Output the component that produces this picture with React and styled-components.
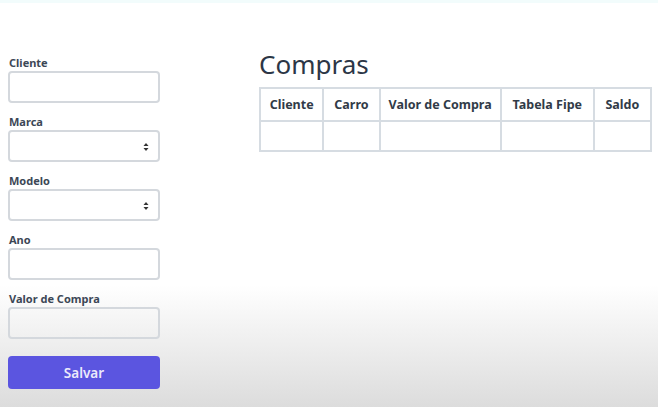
import React from 'react';
import styled, { createGlobalStyle } from 'styled-components';

const GlobalStyle = createGlobalStyle`
    html, body {
        margin: 0;
        padding: 0;
    }
    body {
        width: 658px;
        height: 407px;
        overflow: hidden;
        font-family: 'Noto Sans', 'DejaVu Sans', sans-serif;
        background: linear-gradient(to bottom, #ffffff 0, #ffffff 285px, #dcdcdc 407px);
        border-top: 3px solid #f2fcfc;
        box-sizing: border-box;
    }
`;

const Page = styled.div`
    display: flex;
    align-items: flex-start;
    padding: 53px 0 0 8px;
`;

const Form = styled.form`
    display: flex;
    flex-direction: column;
    width: 152px;
`;

const Field = styled.div`
    display: flex;
    flex-direction: column;
    margin-bottom: 12px;
`;

const Label = styled.label`
    font-size: 11px;
    font-weight: 700;
    line-height: 14px;
    margin-bottom: 1px;
    color: #3c4756;
    padding-left: 1px;
`;

const Input = styled.div`
    position: relative;
    height: 32px;
    box-sizing: border-box;
    border: 2px solid #d4d8dd;
    border-radius: 4px;
    background: transparent;
`;

const Arrows = styled.svg`
    position: absolute;
    right: 9px;
    top: 10px;
`;

const Button = styled.button`
    margin-top: 5px;
    height: 33px;
    border: none;
    border-radius: 4px;
    background: #5b55e0;
    color: #ebe9fb;
    font-family: 'Noto Sans', 'DejaVu Sans', sans-serif;
    font-size: 13.5px;
    font-weight: 600;
`;

const Content = styled.div`
    margin-left: 99px;
    margin-top: -9px;
`;

const Title = styled.h1`
    margin: 0 0 6px 0;
    font-size: 26px;
    font-weight: 400;
    line-height: 34px;
    color: #2c3646;
`;

const Table = styled.table`
    border-collapse: collapse;
    width: 393px;
`;

const Th = styled.th`
    height: 31px;
    border: 2px solid #d6dce2;
    padding: 0;
    font-size: 12.5px;
    font-weight: 700;
    color: #313b48;
    text-align: center;
    width: ${p => p.w}px;
`;

const Td = styled.td`
    height: 28px;
    padding: 0;
    border: 2px solid #d6dce2;
`;

const SelectArrows = () => (
    <Arrows width="6" height="10" viewBox="0 0 6 10">
        <path d="M0.5 4 L3 1 L5.5 4 Z" fill="#333" />
        <path d="M0.5 6 L3 9 L5.5 6 Z" fill="#333" />
    </Arrows>
);

const fields = [
    { label: 'Cliente' },
    { label: 'Marca', select: true },
    { label: 'Modelo', select: true },
    { label: 'Ano' },
    { label: 'Valor de Compra' },
];

const columns = [
    { name: 'Cliente', w: 62 },
    { name: 'Carro', w: 55 },
    { name: 'Valor de Compra', w: 122 },
    { name: 'Tabela Fipe', w: 93 },
    { name: 'Saldo', w: 56 },
];

const App = () => (
    <>
        <GlobalStyle />
        <Page>
            <Form onSubmit={e => e.preventDefault()}>
                {fields.map(f => (
                    <Field key={f.label}>
                        <Label>{f.label}</Label>
                        <Input>{f.select && <SelectArrows />}</Input>
                    </Field>
                ))}
                <Button type="submit">Salvar</Button>
            </Form>
            <Content>
                <Title>Compras</Title>
                <Table>
                    <thead>
                        <tr>
                            {columns.map(c => <Th key={c.name} w={c.w}>{c.name}</Th>)}
                        </tr>
                    </thead>
                    <tbody>
                        <tr>
                            {columns.map(c => <Td key={c.name} />)}
                        </tr>
                    </tbody>
                </Table>
            </Content>
        </Page>
    </>
);

export default App;
